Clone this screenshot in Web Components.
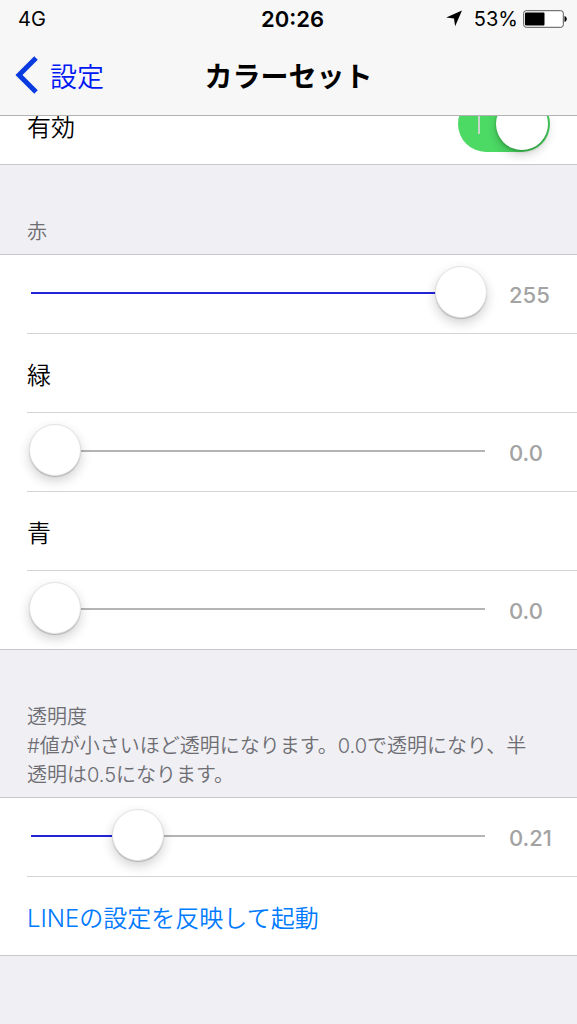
<!DOCTYPE html>
<html lang="ja">
<head>
<meta charset="utf-8">
<meta name="viewport" content="width=device-width, initial-scale=1">
<title>カラーセット</title>
<style>
html { background: #efeff4; }
body { margin: 0; color: #000; font-family: Inter, "Noto Sans CJK JP", sans-serif; font-size: 24px; font-weight: 350; }
</style>
</head>
<body>
<settings-page>
  <status-bar slot="top" carrier="4G" time="20:26" battery="53"></status-bar>
  <nav-bar slot="top" back="設定">カラーセット</nav-bar>
  <settings-group>
    <toggle-row label="有効"></toggle-row>
  </settings-group>
  <settings-group>
    <span slot="caption">赤</span>
    <slider-row label="赤" max="255" value="255" text="255"></slider-row>
    <label-row>緑</label-row>
    <slider-row label="緑" max="255" value="0" text="0.0"></slider-row>
    <label-row>青</label-row>
    <slider-row label="青" max="255" value="0" text="0.0"></slider-row>
  </settings-group>
  <settings-group>
    <span slot="caption">透明度<br>#値が小さいほど透明になります。0.0で透明になり、半透明は0.5になります。</span>
    <slider-row label="透明度" max="1" value="0.204" text="0.21"></slider-row>
    <action-row>LINEの設定を反映して起動</action-row>
  </settings-group>
</settings-page>

<script>
const define = (name, render, ready) => customElements.define(name, class extends HTMLElement {
  connectedCallback() {
    if (this.shadowRoot) return;
    this.attachShadow({ mode: 'open' }).innerHTML = render(this);
    if (ready) ready(this, this.shadowRoot);
  }
});

define('settings-page', () => `
  <style>
    :host { display: block; }
    header { position: sticky; top: 0; z-index: 2; background: #f7f7f7; border-bottom: 1px solid #b2b2b2; }
    /* the list starts scrolled a little way under the header */
    main { margin-top: -31px; padding-bottom: 68px; }
  </style>
  <header><slot name="top"></slot></header>
  <main><slot></slot></main>`);

define('status-bar', el => `
  <style>
    :host { display: grid; grid-template-columns: 1fr auto 1fr; align-items: center; height: 37px; padding: 0 10px 0 18px; font-size: 20px; font-weight: 400; }
    b { font-weight: 600; font-size: 22px; }
    .right { display: flex; align-items: center; justify-content: flex-end; gap: 5px; }
    .loc { margin-right: 6px; }
  </style>
  <span>${el.getAttribute('carrier')}</span>
  <b>${el.getAttribute('time')}</b>
  <span class="right">
    <svg class="loc" width="17" height="17" viewBox="0 0 17 17" aria-hidden="true"><path d="M16 .5 9.100 16.200 8 8.600.2 7.400Z"/></svg>
    <span>${el.getAttribute('battery')}%</span>
    <svg width="44" height="18" viewBox="0 0 44 18" aria-hidden="true">
      <rect x=".7" y=".7" width="39.600" height="16.600" rx="2.500" fill="#fff" stroke="#555"/>
      <rect x="2" y="2.500" width="19.500" height="13" rx="1"/>
      <path d="M41.500 6c3 .8 3 5.200 0 6Z"/>
    </svg>
  </span>`);

define('nav-bar', el => `
  <style>
    :host { display: grid; grid-template-columns: 1fr auto 1fr; align-items: center; box-sizing: border-box; height: 78px; padding: 0 15px 2px; }
    a { display: flex; align-items: center; gap: 12px; color: #0018f5; font-size: 27px; text-decoration: none; }
    h1 { margin: 0; font-size: 28px; font-weight: 600; }
  </style>
  <a href="#"><svg width="23" height="38" viewBox="0 0 23 38" fill="none" stroke="#0a3be0" stroke-width="5" aria-hidden="true"><path d="M21 2 4 19 21 36"/></svg>${el.getAttribute('back')}</a>
  <h1><slot></slot></h1>`);

define('settings-group', () => `
  <style>
    :host { display: block; }
    .caption { padding: 53px 36px 7px 27px; color: #6d6d72; font-size: 20px; line-height: 29px; }
    .caption[hidden] { display: none; }
    .rows { background: #fff; border: solid #c8c7cc; border-width: 1px 0; }
    ::slotted(:not(:last-child):not([slot])) { --line: #d4d4d6; }
  </style>
  <div class="caption"><slot name="caption"></slot></div>
  <div class="rows"><slot></slot></div>`,
  (el, root) => {
    root.querySelector('.caption').hidden = !el.querySelector('[slot=caption]');
  });

const rowStyle = `
    :host { display: block; padding-left: 27px; }
    .row { display: flex; align-items: center; box-sizing: border-box; height: 79px; border-bottom: 1px solid var(--line, transparent); }
    :host(:last-child) .row { height: 78px; border-bottom: 0; }`;

define('label-row', () => `
  <style>${rowStyle}</style>
  <div class="row"><slot></slot></div>`);

define('action-row', () => `
  <style>${rowStyle}
    button { padding: 0; border: 0; background: none; color: #007aff; font: inherit; cursor: pointer; }
  </style>
  <div class="row"><button type="button"><slot></slot></button></div>`);

define('toggle-row', el => `
  <style>${rowStyle}
    .row { justify-content: space-between; padding-right: 27px; }
    input { appearance: none; display: flex; align-items: center; justify-content: space-between; box-sizing: border-box; width: 92px; height: 56px; margin: 0 0 2px; padding: 0 2px 0 20px; border-radius: 28px; background: #d8d8dc; }
    input:checked { background: #4cd964; }
    input::before { content: ""; width: 2px; height: 20px; background: #c9d4cb; }
    input::after { content: ""; width: 52px; height: 52px; border-radius: 50%; background: #fff; box-shadow: 0 5px 10px rgba(0,0,0,.18), 0 1px 3px rgba(0,90,0,.4); }
  </style>
  <div class="row"><label for="t">${el.getAttribute('label')}</label><input id="t" type="checkbox" role="switch" checked></div>`);

define('slider-row', el => `
  <style>${rowStyle}
    .row { gap: 22px; padding-left: 2px; }
    input { appearance: none; flex: 1; min-width: 0; height: 52px; margin: 0 0 4px;
      background:
        linear-gradient(#2323d8, #2323d8) 2px 26px / calc(var(--fill) * (100% - 4px)) 2px no-repeat,
        linear-gradient(#b4b4b4, #b4b4b4) 2px 26px / calc(100% - 4px) 2px no-repeat; }
    input::-webkit-slider-thumb { appearance: none; width: 52px; height: 52px; border-radius: 50%; background: #fff; border: 1px solid #e4e4e4; box-shadow: 0 5px 12px rgba(0,0,0,.18), 0 1px 1px rgba(0,0,0,.2); }
    output { width: 68px; padding-top: 2px; color: #a3a3a3; font-size: 22px; font-weight: 500; }
  </style>
  <div class="row">
    <input id="s" type="range" min="0" step="any" max="${el.getAttribute('max')}" value="${el.getAttribute('value')}" aria-label="${el.getAttribute('label')}">
    <output for="s">${el.getAttribute('text')}</output>
  </div>`,
  (el, root) => {
    const input = root.querySelector('input');
    const paint = () => input.style.setProperty('--fill', input.value / input.max);
    input.addEventListener('input', () => {
      paint();
      const v = Number(input.value);
      root.querySelector('output').textContent = input.max === '1' ? v.toFixed(2) : v.toFixed(v < 100 ? 1 : 0);
    });
    paint();
  });
</script>
</body>
</html>
